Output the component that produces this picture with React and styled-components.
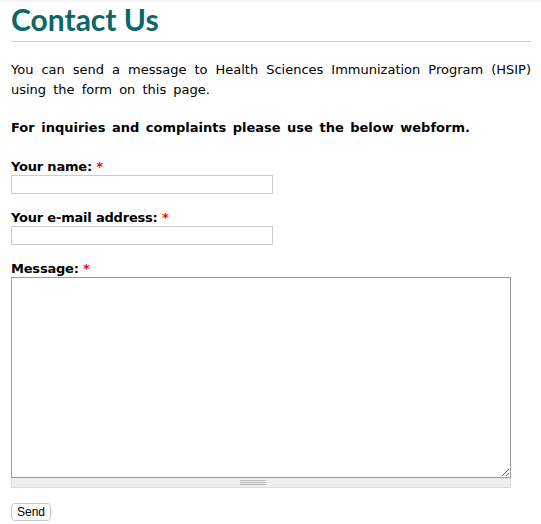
import React from 'react';
import styled, { createGlobalStyle } from 'styled-components';

const GlobalStyle = createGlobalStyle`
  body {
    margin: 0;
    background: #fff;
    font-family: "DejaVu Sans", Verdana, sans-serif;
    color: #000;
  }
`;

const Page = styled.div`
  position: relative;
  padding: 0 10px 0 11px;
  box-shadow: inset 0 3px 3px -2px rgba(0, 0, 0, 0.08);
`;

const Title = styled.h1`
  margin: 0;
  padding: 4px 0 6px;
  font-family: Lato, "Open Sans", sans-serif;
  font-size: 30px;
  font-weight: 700;
  line-height: 31px;
  color: #0b6868;
  border-bottom: 1px solid #c9d3d5;
`;

const Intro = styled.p`
  margin: 18px 0 0;
  font-size: 13px;
  line-height: 20px;
  text-align: justify;
  word-spacing: 3px;
`;

const Notice = styled.p`
  margin: 18px 0 0;
  font-size: 13px;
  font-weight: 700;
  line-height: 20px;
  word-spacing: 2px;
`;

const Form = styled.form`
  display: flex;
  flex-direction: column;
  margin-top: 20px;
  gap: 15px;
`;

const Field = styled.div`
  display: flex;
  flex-direction: column;
`;

const Label = styled.label`
  font-size: 13px;
  font-weight: 700;
  line-height: 17px;
  letter-spacing: -0.2px;
`;

const Required = styled.span`
  color: #f00;
`;

const TextInput = styled.input`
  box-sizing: border-box;
  width: 262px;
  height: 19px;
  margin: 0;
  border: 1px solid #ccc;
  padding: 1px 3px;
  font-size: 12px;
`;

const AreaWrap = styled.div`
  width: 500px;
  display: flex;
  flex-direction: column;
`;

const TextArea = styled.textarea`
  box-sizing: border-box;
  width: 500px;
  height: 201px;
  margin: 0;
  border: 1px solid #999;
  resize: vertical;
  font-family: "DejaVu Sans", sans-serif;
  font-size: 12px;
`;

const Grippie = styled.div`
  box-sizing: border-box;
  height: 10px;
  background: #eee;
  border: 1px solid #ddd;
  border-top: none;
  display: flex;
  justify-content: center;
  align-items: center;

  &::after {
    content: '';
    display: block;
    width: 26px;
    height: 3px;
    margin-right: 16px;
    border-top: 1px solid #bbb;
    border-bottom: 1px solid #bbb;
    background: linear-gradient(#bbb, #bbb) center / 100% 1px no-repeat;
  }
`;

const Actions = styled.div`
  margin-top: 13px;
  padding-bottom: 2px;
`;

const Button = styled.button`
  font-family: "Liberation Sans", Arial, sans-serif;
  font-size: 12px;
  line-height: 14px;
  padding: 1px 5px 1px;
  background: #fff;
  border: 1px solid #c8c8c8;
  border-radius: 4px;
  color: #000;
`;

export default function App() {
  return (
    <>
      <GlobalStyle />
      <Page>
        <Title>Contact Us</Title>
        <Intro>
          You can send a message to Health Sciences Immunization Program (HSIP) using the form on this page.
        </Intro>
        <Notice>For inquiries and complaints please use the below webform.</Notice>
        <Form onSubmit={(e) => e.preventDefault()}>
          <Field>
            <Label htmlFor="name">Your name: <Required>*</Required></Label>
            <TextInput id="name" type="text" />
          </Field>
          <Field>
            <Label htmlFor="mail">Your e-mail address: <Required>*</Required></Label>
            <TextInput id="mail" type="text" />
          </Field>
          <Field>
            <Label htmlFor="message">Message: <Required>*</Required></Label>
            <AreaWrap>
              <TextArea id="message" />
              <Grippie />
            </AreaWrap>
          </Field>
        </Form>
        <Actions>
          <Button type="submit">Send</Button>
        </Actions>
      </Page>
    </>
  );
}
